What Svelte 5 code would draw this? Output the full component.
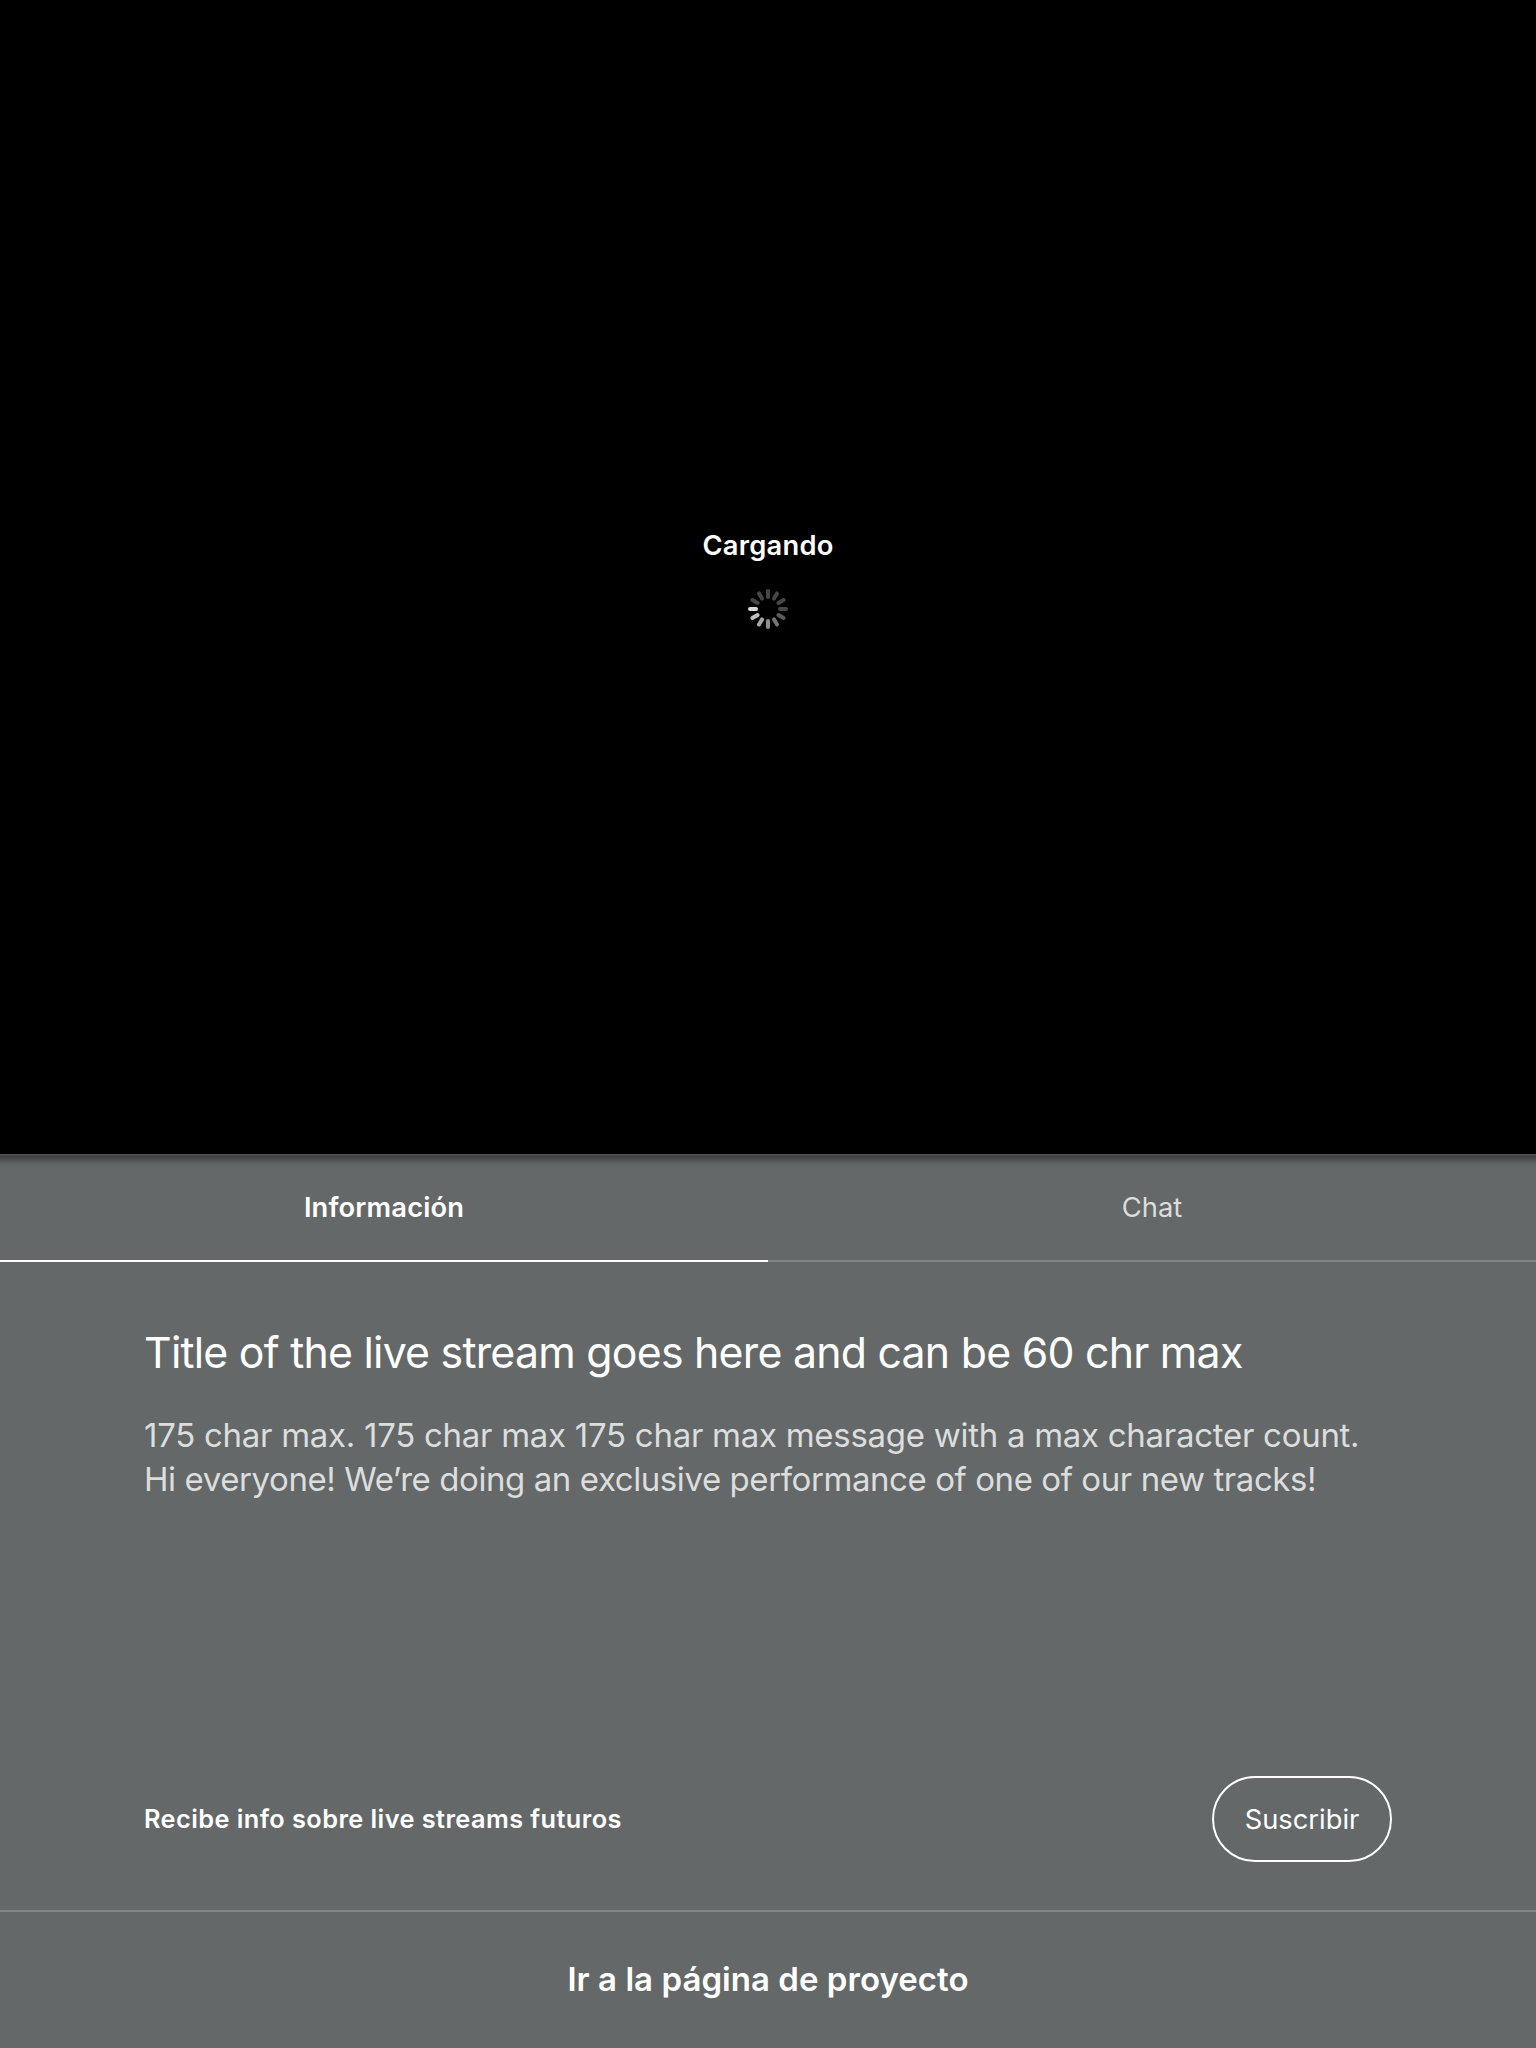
<script>
  const spokes = ['#474747', '#474747', '#474747', '#474747', '#5c5c5c', '#747474', '#8e8e8e', '#a6a6a6', '#bebebe', '#dadada', '#474747', '#474747'];
  const description = [
    '175 char max. 175 char max 175 char max message with a max character count.',
    'Hi everyone! We’re doing an exclusive performance of one of our new tracks!'
  ];
</script>

<main class="screen">
  <section class="video">
    <p class="loading"><span>Cargando</span></p>
    <svg class="spinner" viewBox="-20 -20 40 40" aria-hidden="true">
      {#each spokes as color, i}
        <line x1="0" y1="-12" x2="0" y2="-18" stroke={color} stroke-width="4" stroke-linecap="round" transform={`rotate(${i * 30})`} />
      {/each}
    </svg>
  </section>

  <section class="panel">
    <nav class="tabs">
      <button class="tab active"><span>Información</span></button>
      <button class="tab"><span>Chat</span></button>
    </nav>

    <div class="info">
      <h1><span>Title of the live stream goes here and can be 60 chr max</span></h1>
      <p class="description">
        {#each description as line, i}
          <span class="line" class:tight={i === 1}>{line}</span>
        {/each}
      </p>
      <div class="subscribe">
        <strong>Recibe info sobre live streams futuros</strong>
        <button class="pill"><span>Suscribir</span></button>
      </div>
    </div>

    <footer><button class="project"><span>Ir a la página de proyecto</span></button></footer>
  </section>
</main>

<style>
  :global(body) { background: #646868; }
  * { box-sizing: border-box; margin: 0; }
  button { border: 0; padding: 0; background: none; color: inherit; font: inherit; letter-spacing: inherit; }
  .screen {
    display: flex;
    flex-direction: column;
    width: 1536px;
    height: 2048px;
    color: #fff;
    font-family: Inter, "Liberation Sans", sans-serif;
    white-space: nowrap;
    overflow: hidden;
  }
  .video {
    display: flex;
    flex-direction: column;
    align-items: center;
    height: 1154px;
    padding-top: 529px;
    background: #000;
  }
  .loading { font-size: 27.3px; line-height: 34px; font-weight: 600; letter-spacing: 0.25px; }
  .spinner { width: 40px; height: 40px; margin-top: 26px; }
  .panel {
    display: flex;
    flex-direction: column;
    flex: 1;
    background: linear-gradient(#484a4a 0 2px, #3b3e3e 2px, #4a4d4d 5px, #5e6262 9px, #646868 13px);
  }
  .tabs { display: grid; grid-template-columns: 1fr 1fr; height: 108px; }
  .tab {
    padding-top: 1px;
    border-bottom: 2px solid #828585;
    font-size: 27.3px;
    line-height: 34px;
    color: #dcdddd;
    font-weight: 400;
  }
  .tab.active { border-color: #fff; color: #fff; font-weight: 600; letter-spacing: 0.15px; }
  .info { display: flex; flex-direction: column; flex: 1; padding: 64px 144px 48px; }
  h1 { font-size: 42.8px; line-height: 54px; font-weight: 400; letter-spacing: -0.75px; }
  .description { margin-top: 33px; color: #dcdddd; font-size: 33px; line-height: 44px; letter-spacing: -0.28px; }
  .line { display: block; width: max-content; }
  .tight { letter-spacing: -0.42px; }
  .subscribe { display: flex; align-items: center; justify-content: space-between; margin-top: auto; }
  strong { font-size: 25.3px; line-height: 32px; font-weight: 600; letter-spacing: 0.44px; }
  .pill {
    width: 180px;
    height: 86px;
    border: 2px solid #fff;
    border-radius: 43px;
    font-size: 27.3px;
  }
  footer { height: 138px; border-top: 2px solid #828585; text-align: center; }
  .project { width: 100%; height: 134px; font-size: 33px; font-weight: 600; letter-spacing: 0.04px; }
</style>
